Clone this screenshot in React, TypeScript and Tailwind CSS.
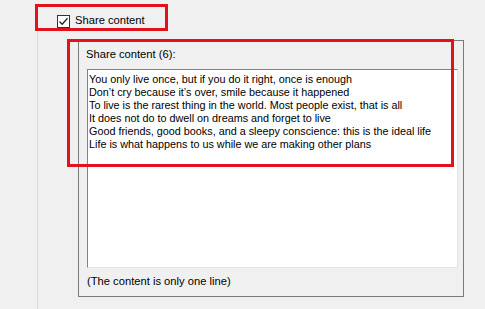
import React from "react";

const lines = [
  "You only live once, but if you do it right, once is enough",
  "Don\u2019t cry because it\u2019s over, smile because it happened",
  "To live is the rarest thing in the world. Most people exist, that is all",
  "It does not do to dwell on dreams and forget to live",
  "Good friends, good books, and a sleepy conscience: this is the ideal life",
  "Life is what happens to us while we are making other plans",
];

export default function App() {
  return (
    <div
      className="relative w-[485px] h-[309px] overflow-hidden bg-[#f0f0f0] text-[10.8px] text-black"
      style={{ fontFamily: '"Liberation Sans", Arial, sans-serif' }}
    >
      <div className="flex items-center h-[30px] pl-[57px] pt-[12px]">
        <div className="w-[13px] h-[13px] border border-[#333] bg-white flex items-center justify-center">
          <svg width="11" height="11" viewBox="0 0 11 11">
            <path d="M1.5 5.5 L4.2 8.2 L9.5 2.2" fill="none" stroke="#222" strokeWidth="1.3" />
          </svg>
        </div>
        <span className="ml-[5px] leading-none text-[11.2px]">Share content</span>
      </div>
      <div className="ml-[37px] h-[279px] border-l border-[#dadada] pl-[40px] pt-[10px]">
        <div className="w-[386px] h-[257px] border border-[#7a7a7a] px-[8px] pt-[5px]">
          <div className="leading-[16px] ml-[-1px] text-[11.2px]">Share content (6):</div>
          <div className="mt-[7px] w-[371px] h-[199px] bg-white border-t border-l border-[#828282] border-r border-b border-r-[#e3e3e3] border-b-[#e3e3e3] pl-[1px] pt-[3px]">
            {lines.map((l) => (
              <div key={l} className="leading-[13px] whitespace-nowrap">
                {l}
              </div>
            ))}
          </div>
          <div className="mt-[5px] leading-[16px] text-[11.2px]">(The content is only one line)</div>
        </div>
      </div>
      <div className="absolute left-[35px] top-[4px] w-[133px] h-[27px] border-[3px] border-[#e3111b]" />
      <div className="absolute left-[67px] top-[39px] w-[387px] h-[128px] border-[3px] border-[#e3111b]" />
    </div>
  );
}
